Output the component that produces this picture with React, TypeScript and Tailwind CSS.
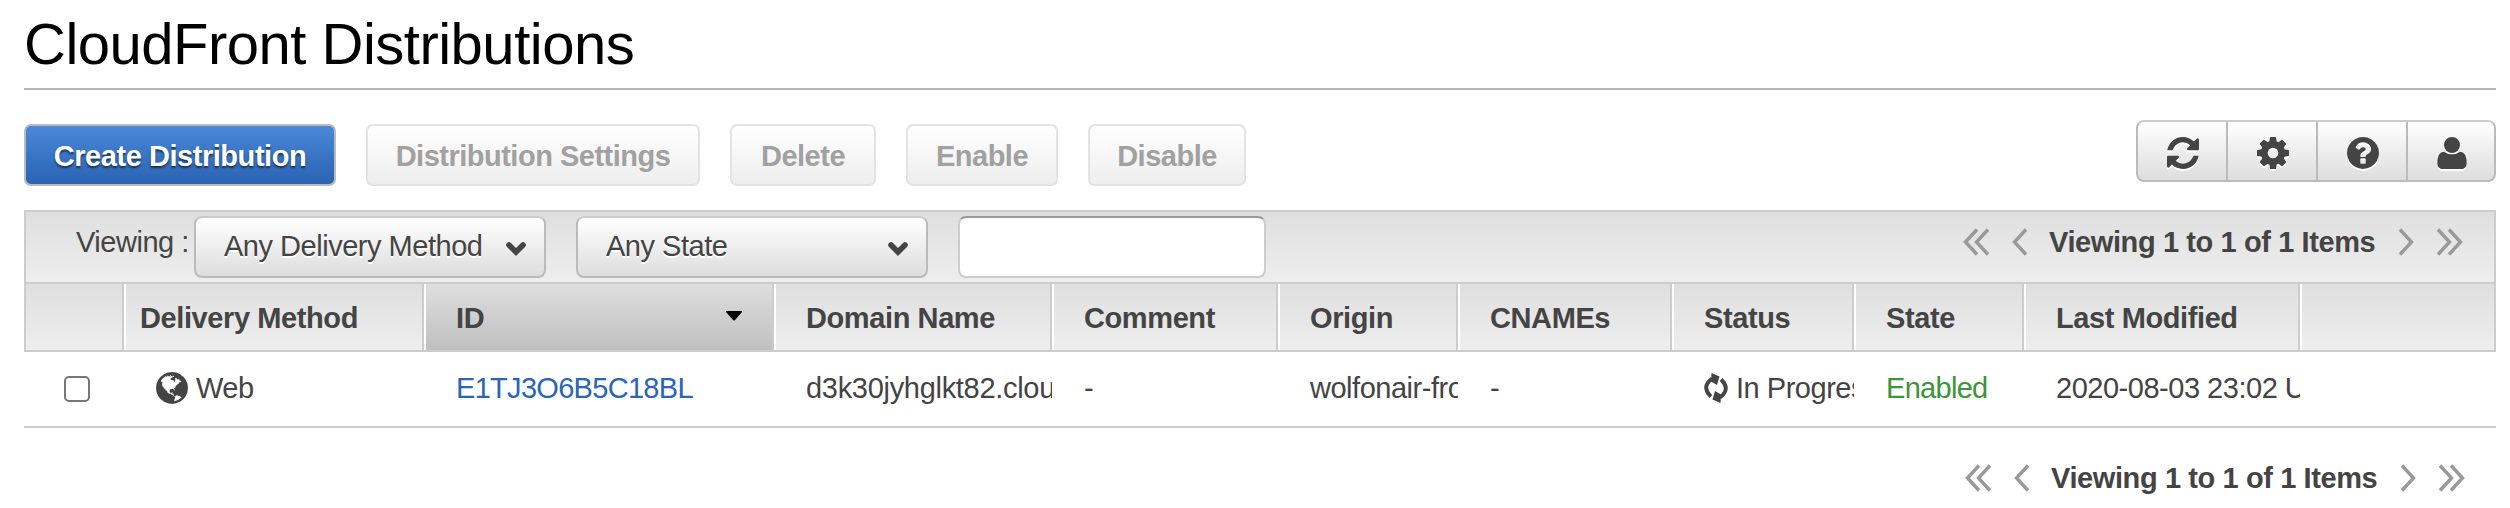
import type { ReactNode } from "react";

const FONT = "font-['Liberation_Sans',Arial,sans-serif]";

const REFRESH =
  "M1511 928q0 5-1 7-64 268-268 434.5t-478 166.5q-146 0-282.5-55t-243.5-157l-129 129q-19 19-45 19t-45-19-19-45v-448q0-26 19-45t45-19h448q26 0 45 19t19 45-19 45l-137 137q71 66 161 102t187 36q134 0 250-65t186-179q11-17 53-117 8-23 30-23h192q13 0 22.5 9.5t9.5 22.5zm25-800v448q0 26-19 45t-45 19h-448q-26 0-45-19t-19-45 19-45l138-138q-148-137-349-137-134 0-250 65t-186 179q-11 17-53 117-8 23-30 23h-199q-13 0-22.5-9.5t-9.5-22.5v-7q65-268 270-434.5t480-166.5q146 0 284 55.5t245 156.5l130-129q19-19 45-19t45 19 19 45z";
const COG =
  "M1152 896q0-106-75-181t-181-75-181 75-75 181 75 181 181 75 181-75 75-181zm512-109v222q0 12-8 23t-20 13l-185 28q-19 54-39 91 35 50 107 138 10 12 10 25t-9 23q-27 37-99 108t-94 71q-12 0-26-9l-138-108q-44 23-91 38-16 136-29 186-7 28-36 28h-222q-14 0-24.5-8.5t-11.5-21.5l-28-184q-49-16-90-37l-141 107q-10 9-25 9-14 0-25-11-126-114-165-168-7-10-7-23 0-12 8-23 15-21 51-66.5t54-70.5q-27-50-41-99l-183-27q-13-2-21-12.5t-8-23.5v-222q0-12 8-23t19-13l186-28q14-46 39-92-40-57-107-138-10-12-10-24 0-10 9-23 26-36 98.5-107.5t94.5-71.5q13 0 26 10l138 107q44-23 91-38 16-136 29-186 7-28 36-28h222q14 0 24.5 8.5t11.5 21.5l28 184q49 16 90 37l142-107q9-9 24-9 13 0 25 10 129 119 165 170 7 8 7 22 0 12-8 23-15 21-51 66.5t-54 70.5q26 50 41 98l183 28q13 2 21 12.5t8 23.5z";
const HELP =
  "M1024 1376v-192q0-14-9-23t-23-9h-192q-14 0-23 9t-9 23v192q0 14 9 23t23 9h192q14 0 23-9t9-23zm256-672q0-88-55.5-163t-138.5-116-170-41q-243 0-371 213-15 24 8 42l132 100q7 6 19 6 16 0 25-12 53-68 86-92 34-24 86-24 48 0 85.5 26t37.5 59q0 38-20 61t-68 45q-63 28-115.5 86.5t-52.5 125.5v36q0 14 9 23t23 9h192q14 0 23-9t9-23q0-19 21.5-49.5t54.5-49.5q32-18 49-28.5t46-35 44.5-48 28-60.5 12.5-81zm384 192q0 209-103 385.5t-279.5 279.5-385.5 103-385.5-103-279.5-279.5-103-385.5 103-385.5 279.5-279.5 385.5-103 385.5 103 279.5 279.5 103 385.5z";
const USER =
  "M1600 1399q0 109-62.5 187t-150.5 78h-982q-88 0-150.5-78t-62.5-187q0-85 8.5-160.5t31.5-152 58.5-131 94-89 134.5-34.5q159 128 377 128t377-128q76 0 134.5 34.5t94 89 58.5 131 31.5 152 8.5 160.5zm-320-887q0 159-112.5 271.5t-271.5 112.5-271.5-112.5-112.5-271.5 112.5-271.5 271.5-112.5 271.5 112.5 112.5 271.5z";
const GLOBE =
  "M896 128q209 0 385.5 103t279.5 279.5 103 385.5-103 385.5-279.5 279.5-385.5 103-385.5-103-279.5-279.5-103-385.5 103-385.5 279.5-279.5 385.5-103zm274 521q-2 1-9.5 9.5t-13.5 9.5q2 0 4.5-5t5-11 3.5-7q6-7 22-15 14-6 52-12 34-8 51 11-2-2 9.5-13t14.5-12q3-2 15-4.5t15-7.5l2-22q-12 1-17.5-7t-6.5-21q0 2-6 8 0-7-4.5-8t-11.5 1-9 1q-10-3-15-7.5t-8-16.5-4-15q-2-5-9.5-11t-9.5-10q-1-2-2.5-5.5t-3-6.5-4-5.5-5.5-2.5-7 5-7.5 10-4.5 5q-3-2-6-1.5t-4.5 1-4.5 3-5 3.5q-3 2-8.5 3t-8.5 2q15-5-1-11-10-4-16-3 9-4 7.5-12t-8.5-14h5q-1-4-8.5-8.5t-17.5-8.5-13-6q-8-5-34-9.5t-33-.5q-5 6-4.5 10.5t4 14 3.5 12.5q1 6-5.5 13t-6.5 12q0 7 14 15.5t10 21.5q-3 8-16 16t-16 12q-5 8-1.5 18.5t10.5 16.5q2 2 1.5 4t-3.5 4.5-5.5 4-6.5 3.5l-3 2q-11 5-20.5-6t-13.5-26q-7-25-16-30-23-8-29 1-5-13-41-26-25-9-58-4 6-1 0-15-7-15-19-12 3-6 4-17.5t1-13.5q3-13 12-23 1-1 7-8.5t9.5-13.5.5-6q35 4 50-11 5-5 11.5-17t10.5-17q9-6 14-5.5t14.5 5.5 14.5 5q14 1 15.5-11t-7.5-20q12 1 3-17-4-7-8-9-12-4-27 5-8 4 2 8-1-1-9.5 10.5t-16.5 17.5-16-5q-1-1-5.5-13.5t-9.5-13.5q-8 0-16 15 3-8-11-15t-24-8q19-12-8-27-7-4-20.5-5t-19.5 4q-5 7-5.5 11.5t5 8 10.5 5.5 11.5 4 8.5 3q14 10 8 14-2 1-8.5 3.5t-11.5 4.5-6 4q-3 4 0 14t-2 14q-5-5-9-17.5t-7-16.5q7 9-25 6l-10-1q-4 0-16 2t-20.5 1-13.5-8q-4-8 0-20 1-4 4-2-4-3-11-9.5t-10-8.5q-46 15-94 41 6 1 12-1 5-2 13-6.5t10-5.5q34-14 42-7l5-5q14 16 20 25-7-4-30-1-20 6-22 12 7 12 5 18-4-3-11.5-10t-14.5-11-15-5q-16 0-22 1-146 80-235 222 7 7 12 8 4 1 5 9t2.5 11 11.5-3q9 8 3 19 1-1 44 27 19 17 21 21 3 11-10 18-1-2-9-9t-9-4q-3 5 .5 18.5t10.5 12.5q-7 0-9.5 16t-2.5 35.5-1 23.5l2 1q-3 12 5.5 34.5t21.5 19.5q-13 3 20 43 6 8 8 9 3 2 12 7.5t15 10 10 10.5q4 5 10 22.5t14 23.5q-2 6 9.5 20t10.5 23q-1 0-2.5 1t-2.5 1q3 7 15.5 14t15.5 13q1 3 2 10t3 11 8 2q2-20-24-62-15-25-17-29-3-5-5.5-15.5t-4.5-14.5q2 0 6 1.5t8.5 3.5 7.5 4 2 3q-3 7 2 17.5t12 18.5 17 19 12 13q6 6 14 19.5t0 13.5q9 0 20 10.5t17 19.5q5 8 8 26t5 24q2 7 8.5 13.5t12.5 9.5l16 8 13 7q5 2 18.5 10.5t21.5 11.5q10 4 16 4t14.5-2.5 13.5-3.5q15-2 29 15t21 21q36 19 55 11-2 1 .5 7.5t8 15.5 9 14.5 5.5 8.5q5 6 18 15t18 15q6-4 7-9-3 8 7 20t18 10q14-3 14-32-31 15-49-18 0-1-2.5-5.5t-4-8.5-2.5-8.5 0-7.5 5-3q9 0 10-3.5t-2-12.5-4-13q-1-8-11-20t-12-15q-5 9-16 8t-16-9q0 1-1.5 5.5t-1.5 6.5q-13 0-15-1 1-3 2.5-17.5t3.5-22.5q1-4 5.5-12t7.5-14.5 4-12.5-4.5-9.5-17.5-2.5q-19 1-26 20-1 3-3 10.5t-5 11.5-9 7q-7 3-24 2t-24-5q-13-8-22.5-29t-9.5-37q0-10 2.5-26.5t3-25-5.5-24.5q3-2 9-9.5t10-10.5q2-1 4.5-1.5t4.5 0 4-1.5 3-6q-1-1-4-3-3-3-4-3 7 3 28.5-1.5t27.5 1.5q15 11 22-2 0-1-2.5-9.5t-.5-13.5q5 27 29 9 3 3 15.5 5t17.5 5q3 2 7 5.5t5.5 4.5 5-.5 8.5-6.5q10 14 12 24 11 40 19 44 7 3 11 2t4.5-9.5 0-14-1.5-12.5l-1-8v-18l-1-8q-15-3-18.5-12t1.5-18.5 15-18.5q1-1 8-3.5t15.5-6.5 12.5-8q21-19 15-35 7 0 11-9-1 0-5-3t-7.5-5-4.5-2q9-5 2-16 5-3 7.5-11t7.5-10q9 12 21 2 7-8 1-16 5-7 20.5-10.5t18.5-9.5q7 2 8-2t1-12 3-12q4-5 15-9t13-5l17-11q3-4 0-4 18 2 31-11 10-11-6-20 3-6-3-9.5t-15-5.5q3-1 11.5-.5t10.5-1.5q15-10-7-16-17-5-43 12zm-163 877q206-36 351-189-3-3-12.5-4.5t-12.5-3.5q-18-7-24-8 1-7-2.5-13t-8-9-12.5-8-11-7q-2-2-7-6t-7-5.5-7.5-4.5-8.5-2-10 1l-3 1q-3 1-5.5 2.5t-5.5 3-4 3 0 2.5q-21-17-36-22-5-1-11-5.5t-10.5-7-10-1.5-11.5 7q-5 5-6 15t-2 13q-7-5 0-17.5t2-18.5q-3-6-10.5-4.5t-12 4.5-11.5 8.5-9 6.5-8.5 5.5-8.5 7.5q-3 4-6 12t-5 11q-2-4-11.5-6.5t-9.5-5.5q2 10 4 35t5 38q7 31-12 48-27 25-29 40-4 22 12 26 0 7-8 20.5t-7 21.5q0 6 2 16z";

function DisabledButton({ className, children }: { className: string; children: ReactNode }) {
  return (
    <button
      disabled
      className={`h-[62px] rounded-[7px] border-2 border-[#e3e3e3] bg-linear-to-b from-white to-[#eeeeee] pt-[2px] font-bold tracking-[-0.5px] whitespace-nowrap text-[#a1a1a1] ${className}`}
    >
      {children}
    </button>
  );
}

function ToolButton({ className, path, box }: { className: string; path: string; box: string }) {
  return (
    <button className={`flex items-center justify-center border-[#bbbbbb] pt-[3px] pl-[2px] ${className}`}>
      <svg viewBox={box} className="h-8 w-8 fill-[#444444] drop-shadow-[0_2px_0_#ffffff]">
        <path d={path} />
      </svg>
    </button>
  );
}

function Select({ className, label }: { className: string; label: string }) {
  return (
    <div
      className={`flex h-[62px] w-[352px] items-center justify-between rounded-[8px] border-2 border-[#bbbbbb] border-t-[#cccccc] bg-linear-to-b from-white to-[#dddddd] pr-[17px] pb-[2px] pl-7 ${className}`}
    >
      <span className="whitespace-nowrap [text-shadow:0_2px_0_#ffffff]">{label}</span>
      <svg
        viewBox="0 0 22 16"
        className="mt-[6px] h-4 w-[22px] fill-none stroke-[#444444]"
        strokeWidth="5.6"
        strokeLinecap="round"
      >
        <path d="M4 4 L11 11 L18 4" />
      </svg>
    </div>
  );
}

function Pager({ className }: { className: string }) {
  return (
    <div className={`flex items-center font-bold ${className}`}>
      <svg viewBox="0 0 28 30" className="h-[30px] w-7 fill-none stroke-[#999999]" strokeWidth="3.4">
        <path d="M15 2.5 L3.5 15 L15 27.5 M26 2.5 L14.5 15 L26 27.5" />
      </svg>
      <svg viewBox="0 0 18 30" className="ml-5 h-[30px] w-[18px] fill-none stroke-[#999999]" strokeWidth="3.4">
        <path d="M16 2.5 L4.5 15 L16 27.5" />
      </svg>
      <span className="ml-[21px] w-[329px] tracking-[-0.4px] whitespace-nowrap">Viewing 1 to 1 of 1 Items</span>
      <svg viewBox="0 0 18 30" className="ml-[20px] h-[30px] w-[18px] fill-none stroke-[#999999]" strokeWidth="3.4">
        <path d="M2 2.5 L13.5 15 L2 27.5" />
      </svg>
      <svg viewBox="0 0 28 30" className="ml-5 h-[30px] w-7 fill-none stroke-[#999999]" strokeWidth="3.4">
        <path d="M2 2.5 L13.5 15 L2 27.5 M13 2.5 L24.5 15 L13 27.5" />
      </svg>
    </div>
  );
}

const COLUMNS = "grid grid-cols-[100px_300px_350px_278px_226px_180px_214px_182px_170px_276px_192px]";
const HEAD =
  "flex items-center border-r-2 border-white pt-[2px] pl-[30px] tracking-[-0.4px] whitespace-nowrap shadow-[inset_-2px_0_0_#cccccc]";
const CELL = "mr-[2px] flex items-center overflow-hidden pb-[2px] pl-[30px] whitespace-nowrap";

export default function App() {
  return (
    <main
      className={`h-[508px] w-[2510px] overflow-hidden bg-white px-6 text-[29px] leading-8 tracking-[-0.48px] text-[#444444] ${FONT}`}
    >
      <div className="w-[2472px]">
        <h1 className="h-[90px] border-b-2 border-[#b5b5b5] pt-[12px] text-[58px] leading-[64px] font-normal tracking-[-0.5px] whitespace-nowrap text-black">
          CloudFront Distributions
        </h1>

        <div className="flex h-[120px] items-start justify-between">
          <div className="flex gap-[30px] pt-[34px]">
            <button className="h-[62px] w-[312px] rounded-[7px] border-2 border-[#bbbbbb] bg-linear-to-b from-[#4a88d9] to-[#2a63b2] pt-[2px] font-bold tracking-[-0.45px] whitespace-nowrap text-white [text-shadow:0_2px_2px_#1c3350]">
              Create Distribution
            </button>
            <DisabledButton className="w-[334px]">Distribution Settings</DisabledButton>
            <DisabledButton className="w-[146px]">Delete</DisabledButton>
            <DisabledButton className="w-[152px]">Enable</DisabledButton>
            <DisabledButton className="w-[158px]">Disable</DisabledButton>
          </div>
          <div className="mt-[30px] flex h-[62px] w-[360px] overflow-hidden rounded-[8px] border-2 border-[#bbbbbb] border-t-[#cccccc] bg-linear-to-b from-white to-[#dddddd]">
            <ToolButton className="w-[90px] border-r-2" path={REFRESH} box="0 0 1536 1536" />
            <ToolButton className="w-[90px] border-r-2" path={COG} box="128 128 1536 1536" />
            <ToolButton className="w-[90px] border-r-2" path={HELP} box="128 128 1536 1536" />
            <ToolButton className="w-[86px]" path={USER} box="128 128 1536 1536" />
          </div>
        </div>

        <div className="border-2 border-[#cccccc]">
          <div className="flex h-[72px] items-start border-b-2 border-[#cccccc] bg-linear-to-b from-[#dfdfdf] to-[#eeeeee] pt-1">
            <span className="mt-[10px] ml-[50px] w-[118px] whitespace-nowrap">Viewing :</span>
            <Select className="" label="Any Delivery Method" />
            <Select className="ml-[30px]" label="Any State" />
            <input
              type="text"
              className="ml-[30px] h-[62px] w-[308px] rounded-[8px] border-2 border-[#cccccc] border-t-[#999999] bg-white"
            />
            <Pager className="mt-[10px] mr-[30px] ml-auto" />
          </div>

          <div className={`${COLUMNS} h-[66px] bg-linear-to-b from-[#dfdfdf] to-[#eeeeee] font-bold`}>
            <div className={HEAD} />
            <div className={`${HEAD} !pl-[14px]`}>Delivery Method</div>
            <div className={`${HEAD} justify-between bg-linear-to-b from-[#dedede] to-[#c0c0c0] pr-[32px]`}>
              ID
              <svg viewBox="0 0 16 10" className="mb-[4px] h-[10px] w-4 fill-black">
                <path d="M0 0H16V1L9 9Q8 10 7 9L0 1Z" />
              </svg>
            </div>
            <div className={HEAD}>Domain Name</div>
            <div className={HEAD}>Comment</div>
            <div className={HEAD}>Origin</div>
            <div className={HEAD}>CNAMEs</div>
            <div className={HEAD}>Status</div>
            <div className={HEAD}>State</div>
            <div className={HEAD}>Last Modified</div>
            <div />
          </div>
        </div>

        <div className="h-[76px] border-b-2 border-[#cccccc] pl-[2px]">
          <div className={`${COLUMNS} h-[74px]`}>
            <div className="flex items-center pl-[38px]">
              <input
                type="checkbox"
                className="h-[26px] w-[26px] appearance-none rounded-[5px] border-2 border-[#767676] bg-white"
              />
            </div>
            <div className={CELL}>
              <svg viewBox="128 128 1536 1536" className="mr-2 h-8 w-8 shrink-0 fill-[#444444]">
                <path d={GLOBE} />
              </svg>
              Web
            </div>
            <div className={`${CELL} tracking-[-0.7px] text-[#2a65b8]`}>E1TJ3O6B5C18BL</div>
            <div className={`${CELL} tracking-[-0.3px]`}>d3k30jyhglkt82.cloudfront.net</div>
            <div className={CELL}>-</div>
            <div className={CELL}>wolfonair-frontend</div>
            <div className={CELL}>-</div>
            <div className={CELL}>
              <svg viewBox="0 0 24 30" className="mr-2 h-[30px] w-6 shrink-0 fill-none stroke-[#444444]" strokeWidth="4">
                <path d="M7 23.5Q-3 14 8 5.5M17 6.5Q27 16 16 24.5" />
                <path d="M7.5 0L15.5 3.5L13 12L7 8.5ZM16.5 30L8.5 26.5L11 18L17 21.5Z" className="fill-[#444444] stroke-none" />
              </svg>
              In Progress
            </div>
            <div className={`${CELL} tracking-[-0.7px] text-[#3c943c]`}>Enabled</div>
            <div className={CELL}>2020-08-03 23:02 UTC+8</div>
            <div />
          </div>
        </div>

        <Pager className="mt-[34px] mr-[30px] justify-end" />
      </div>
    </main>
  );
}
